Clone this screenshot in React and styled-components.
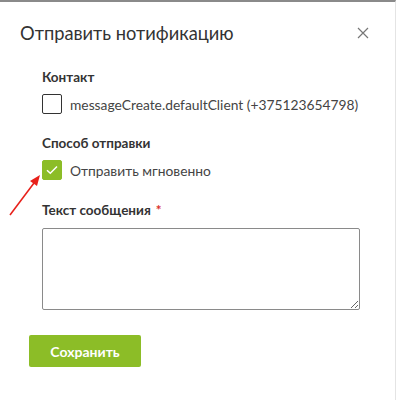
import React, { useState } from 'react';
import styled, { createGlobalStyle } from 'styled-components';

const GlobalStyle = createGlobalStyle`
  html, body {
    margin: 0;
    padding: 0;
    background: #fff;
  }
  body {
    font-family: Lato, "Noto Sans", sans-serif;
    color: #333;
  }
`;

const Dialog = styled.div`
  position: relative;
  width: 396px;
  height: 400px;
  box-sizing: border-box;
  border-top: 2px solid #8a8a8a;
  border-right: 1px solid #e4e4e4;
  background: #fff;
`;

const Header = styled.div`
  display: flex;
  align-items: center;
  justify-content: space-between;
  padding: 16px 26px 0 20px;
  height: 30px;
`;

const Title = styled.h2`
  margin: 0;
  font-size: 18.3px;
  font-weight: 400;
  color: #333;
`;

const CloseButton = styled.button`
  border: none;
  background: none;
  padding: 0;
  width: 12px;
  height: 12px;
  display: flex;
  cursor: pointer;
`;

const Body = styled.div`
  padding: 20px 37px 0 42px;
  display: flex;
  flex-direction: column;
`;

const Section = styled.div`
  display: flex;
  flex-direction: column;
  margin-bottom: ${p => p.$gap ?? 14}px;
`;

const Label = styled.div`
  font-size: 13.5px;
  font-weight: 700;
  color: #333;
  line-height: 18px;
  margin-bottom: 8px;
`;

const Required = styled.span`
  color: #d9302c;
  margin-left: 5px;
`;

const CheckRow = styled.label`
  display: flex;
  align-items: center;
  gap: 8px;
  font-size: 13.8px;
  color: #444;
  white-space: nowrap;
  cursor: pointer;
`;

const Box = styled.span`
  width: 20px;
  height: 20px;
  box-sizing: border-box;
  border-radius: 2px;
  border: 1px solid ${p => (p.$checked ? '#8cbd27' : '#333')};
  background: ${p => (p.$checked ? '#8cbd27' : '#fff')};
  display: flex;
  align-items: center;
  justify-content: center;
  flex-shrink: 0;
`;

const TextArea = styled.textarea`
  display: block;
  width: 318px;
  height: 82px;
  box-sizing: border-box;
  border: 1px solid #8a8a8a;
  border-radius: 2px;
  margin: 1px 0 0;
  font-family: inherit;
`;

const Footer = styled.div`
  padding: 25px 0 0 29px;
`;

const SaveButton = styled.button`
  width: 112px;
  height: 32px;
  border: none;
  border-radius: 2px;
  background: #8cbd27;
  color: #fff;
  font-family: Lato, "Noto Sans", sans-serif;
  font-size: 14px;
  font-weight: 700;
  cursor: pointer;
`;

const Arrow = styled.svg`
  position: absolute;
  left: 6px;
  top: 169px;
`;

function Check({ checked, onToggle, children }) {
  return (
    <CheckRow onClick={onToggle}>
      <Box $checked={checked}>
        {checked && (
          <svg width="12" height="10" viewBox="0 0 12 10">
            <path d="M1 5.2 L4.3 8.3 L11 1.5" fill="none" stroke="#fff" strokeWidth="1.5" />
          </svg>
        )}
      </Box>
      {children}
    </CheckRow>
  );
}

export default function App() {
  const [contact, setContact] = useState(false);
  const [instant, setInstant] = useState(true);

  return (
    <>
      <GlobalStyle />
      <Dialog>
        <Header>
          <Title>Отправить нотификацию</Title>
          <CloseButton aria-label="close">
            <svg width="12" height="12" viewBox="0 0 12 12">
              <path d="M1 1 L11 11 M11 1 L1 11" stroke="#777" strokeWidth="1.2" />
            </svg>
          </CloseButton>
        </Header>
        <Body>
          <Section $gap={20}>
            <Label>Контакт</Label>
            <Check checked={contact} onToggle={() => setContact(!contact)}>
              messageCreate.defaultClient (+375123654798)
            </Check>
          </Section>
          <Section $gap={21}>
            <Label>Способ отправки</Label>
            <Check checked={instant} onToggle={() => setInstant(!instant)}>
              Отправить мгновенно
            </Check>
          </Section>
          <Section $gap={0}>
            <Label>
              Текст сообщения<Required>*</Required>
            </Label>
            <TextArea />
          </Section>
        </Body>
        <Footer>
          <SaveButton>Сохранить</SaveButton>
        </Footer>
        {/* red pointer arrow from the screenshot annotation */}
        <Arrow width="40" height="50" viewBox="0 0 40 50">
          <path d="M4 44 L28 12" stroke="#e8201a" strokeWidth="1.6" fill="none" />
          <path d="M34 4 L24 10 L31 15 Z" fill="#e8201a" />
        </Arrow>
      </Dialog>
    </>
  );
}
